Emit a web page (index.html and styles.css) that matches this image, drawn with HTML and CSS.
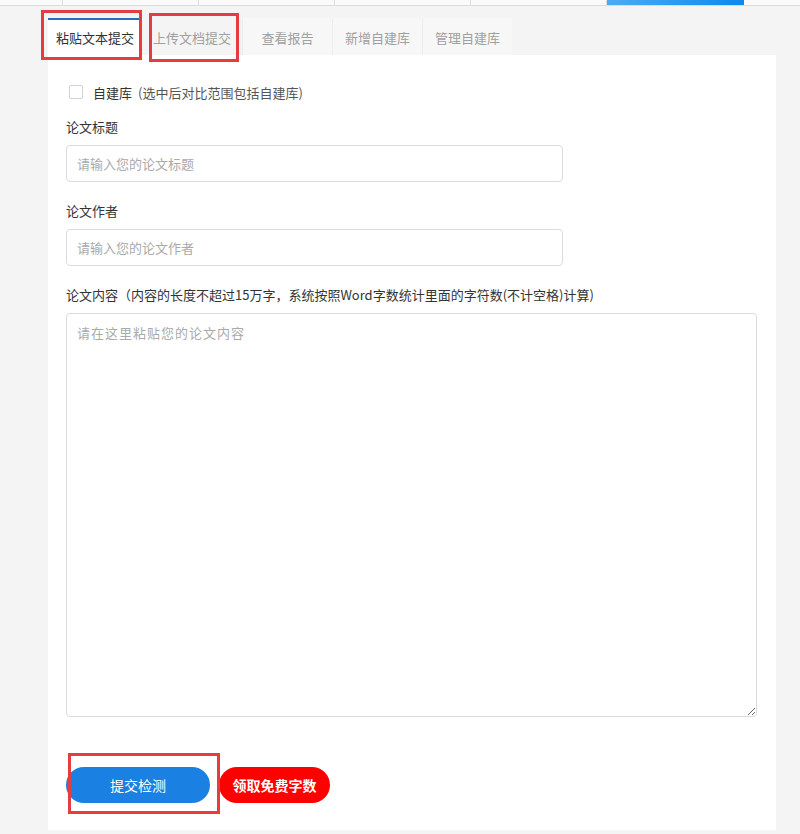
FILE: index.html
```html
<!DOCTYPE html>
<html lang="zh-CN">
<head>
    <meta charset="UTF-8">
    <title>论文检测</title>
    <link rel="stylesheet" href="styles.css">
</head>
<body>

    <div class="topnav">
        <span class="cell"></span>
        <span class="cell"></span>
        <span class="cell"></span>
        <span class="cell"></span>
        <span class="cell"></span>
        <span class="cell active"></span>
        <span class="cell last"></span>
    </div>

    <div class="main">
        <ul class="tabs">
            <li class="tab active">粘贴文本提交</li>
            <li class="tab">上传文档提交</li>
            <li class="tab boxed">查看报告</li>
            <li class="tab boxed">新增自建库</li>
            <li class="tab boxed">管理自建库</li>
        </ul>

        <div class="panel">
            <label class="check-row">
                <span class="checkbox"></span>
                <span class="check-name">自建库</span>
                <span class="check-note">(选中后对比范围包括自建库)</span>
            </label>

            <div class="field">
                <div class="field-label">论文标题</div>
                <input class="text-input" type="text" placeholder="请输入您的论文标题">
            </div>

            <div class="field">
                <div class="field-label">论文作者</div>
                <input class="text-input" type="text" placeholder="请输入您的论文作者">
            </div>

            <div class="field">
                <div class="field-label">论文内容（内容的长度不超过15万字，系统按照Word字数统计里面的字符数(不计空格)计算)</div>
                <textarea class="text-area" placeholder="请在这里粘贴您的论文内容"></textarea>
            </div>

            <div class="actions">
                <button class="btn-submit">提交检测</button>
                <button class="btn-free">领取免费字数</button>
            </div>
        </div>
    </div>

    <!-- 标注框 -->
    <div class="mark mark-1"></div>
    <div class="mark mark-2"></div>
    <div class="mark mark-3"></div>

</body>
</html>
```

FILE: styles.css
```css
body {
    margin: 0;
    padding: 0;
    background-color: #f4f4f4;
    font-family: "Noto Sans CJK SC", "Liberation Sans", sans-serif;
    font-size: 13px;
    color: #333;
    position: relative;
    height: 834px;
    overflow: hidden;
}
.topnav {
    display: flex;
    height: 5px;
    margin-left: -73px;
    background: #fafafa;
    border-bottom: 1px solid #dcdcdc;
    overflow: hidden;
}
.topnav .cell {
    flex: none;
    width: 136px;
    box-sizing: border-box;
    border-right: 1px solid #dcdcdc;
}
.topnav .cell.active {
    width: 137px;
    border-right: none;
    background: linear-gradient(to right, #4fabf0, #0a8af0);
}
.topnav .cell.last {
    border-right: none;
    width: 80px;
}
.main {
    margin: 12px 0 0 48px;
    width: 728px;
}
.tabs {
    list-style: none;
    margin: 0;
    padding: 0;
    display: flex;
    height: 37px;
}
.tab {
    box-sizing: border-box;
    min-width: 90px;
    padding: 0 11px;
    line-height: 35px;
    text-align: center;
    color: #a0a0a0;
    border-top: 2px solid transparent;
}
.tab.active {
    padding: 0 8px;
    background: #fff;
    color: #333;
    border-top-color: #2a6db5;
}
.tab.boxed {
    background: #f7f7f7;
    border-left: 1px solid #ececec;
}
.panel {
    background: #fff;
    padding: 27px 19px 27px 18px;
}
.check-row {
    display: flex;
    align-items: center;
    height: 20px;
    padding-left: 3px;
}
.checkbox {
    width: 12px;
    height: 12px;
    border: 1px solid #d4d4d4;
    border-radius: 2px;
    margin-right: 10px;
}
.check-name {
    color: #333;
}
.check-note {
    color: #555;
    margin-left: 6px;
}
.field {
    margin-top: 15px;
}
.field + .field {
    margin-top: 19px;
}
.field-label {
    line-height: 20px;
    margin-bottom: 8px;
}
.text-input,
.text-area {
    display: block;
    box-sizing: border-box;
    border: 1px solid #dcdcdc;
    border-radius: 4px;
    font-family: inherit;
    font-size: 13px;
    color: #333;
    outline: none;
}
.text-input {
    width: 497px;
    height: 37px;
    padding: 0 10px;
}
.text-area {
    width: 691px;
    height: 404px;
    padding: 9px 10px;
    letter-spacing: 1px;
    resize: vertical;
}
.text-input::placeholder,
.text-area::placeholder {
    color: #aaa;
}
.actions {
    display: flex;
    margin-top: 50px;
}
.actions button {
    height: 36px;
    border: none;
    border-radius: 18px;
    color: #fff;
    font-family: inherit;
    font-size: 14px;
    cursor: pointer;
}
.btn-submit {
    width: 144px;
    background: #1a80e2;
}
.btn-free {
    width: 111px;
    margin-left: 9px;
    background: #ff0000;
    font-weight: bold;
}
/* 标注框 */
.mark {
    position: absolute;
    box-sizing: border-box;
    border: 3px solid #e53d3f;
}
.mark-1 {
    left: 41px;
    top: 10px;
    width: 101px;
    height: 50px;
}
.mark-2 {
    left: 149px;
    top: 13px;
    width: 90px;
    height: 49px;
}
.mark-3 {
    left: 68px;
    top: 753px;
    width: 152px;
    height: 61px;
}
```
